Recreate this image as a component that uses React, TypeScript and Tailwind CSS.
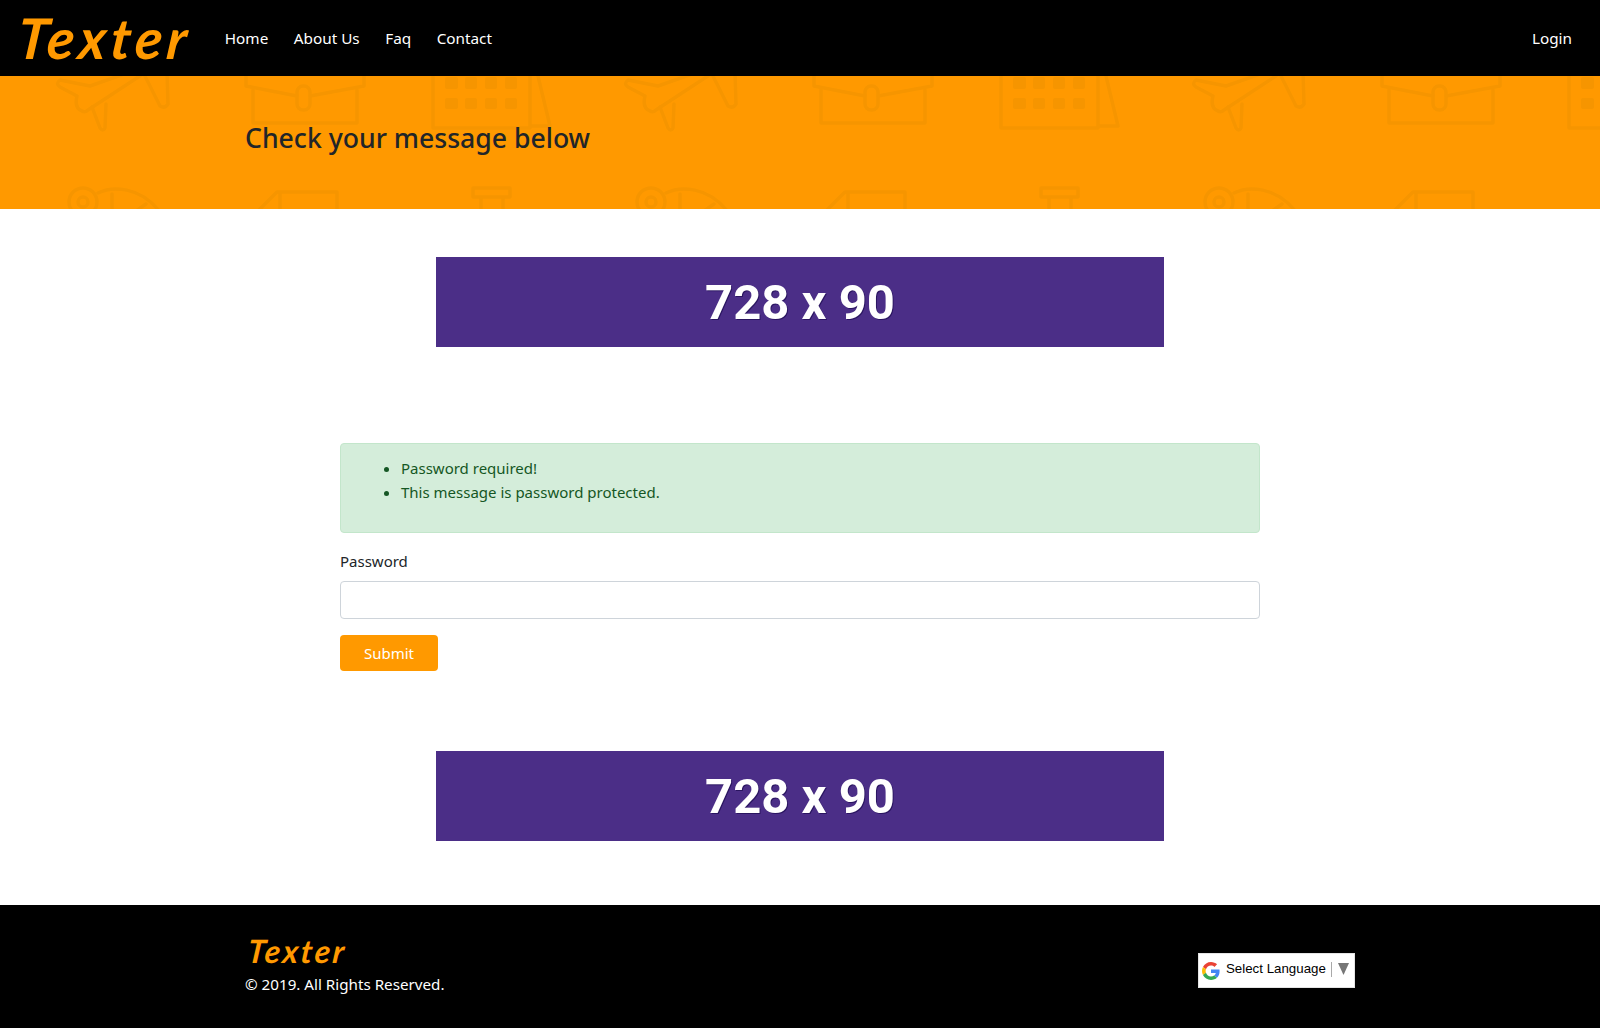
import React from 'react';

const sans = "font-['Segoe_UI','Noto_Sans',sans-serif]";

function HeroPattern() {
  return (
    <svg className="absolute inset-0 h-full w-full" aria-hidden="true">
      <defs>
        <pattern id="tile" x="0" y="0" width="568" height="133" patternUnits="userSpaceOnUse">
          <g fill="none" stroke="#f69500" strokeWidth="3.5" strokeLinejoin="round" strokeLinecap="round">
            {/* plane */}
            <path d="M130 -4 L90 10 L60 4 Q55 8 60 11 L77 20 Q74 32 82 35 Q85 37 88 34 L146 -4" />
            <path d="M92 31 L100 52 Q103 56 105 52 L106 28" />
            <path d="M143 -4 L160 30 Q165 33 168 28 L167 -4" />
            {/* briefcase */}
            <path d="M246 -4 V10 L297 20 M310 20 L364 10 V-4 M253 14 V47 H357 V14" />
            <rect x="297" y="10" width="13" height="24" rx="6" />
            {/* calendar */}
            <path d="M433 -4 V52 H530 V-4 M537 -4 L550 50 H530" />
            <g fill="#f69500" stroke="none">
              <rect x="445" y="1" width="13" height="12" rx="2" />
              <rect x="465" y="1" width="12" height="12" rx="2" />
              <rect x="485" y="1" width="12" height="12" rx="2" />
              <rect x="505" y="1" width="12" height="12" rx="2" />
              <rect x="445" y="22" width="13" height="11" rx="2" />
              <rect x="465" y="22" width="12" height="11" rx="2" />
              <rect x="485" y="22" width="12" height="11" rx="2" />
              <rect x="505" y="22" width="12" height="11" rx="2" />
            </g>
            {/* second row */}
            <circle cx="83" cy="126" r="14" />
            <circle cx="83" cy="126" r="5" />
            <path d="M98 117 C112 110 140 110 160 136 M112 118 V137 M133 137 L146 128" />
            <path d="M257 136 L277 116 H337 V137 M280 116 V137" />
            <path d="M473 112 H510 V121 H473 Z M481 121 V137 M503 121 V137" />
          </g>
        </pattern>
      </defs>
      <rect width="100%" height="100%" fill="url(#tile)" />
    </svg>
  );
}

function Ad() {
  return (
    <div className="mx-auto flex h-[90px] w-[728px] items-center justify-center bg-[#4b2e87] pt-[2px]">
      <span className="font-['Roboto',sans-serif] text-[49px] font-bold text-white [text-shadow:1px_1px_0_#2a1560]">
        728 x 90
      </span>
    </div>
  );
}

function Logo({ small }: { small?: boolean }) {
  return (
    <span
      className={
        "inline-block -skew-x-6 font-['Lato',sans-serif] font-bold italic text-[#ff9900] " +
        (small ? 'text-[32px] leading-[32px] tracking-[2.5px]' : 'text-[56px] leading-[58px] tracking-[4.5px]')
      }
    >
      Texter
    </span>
  );
}

export default function App() {
  return (
    <div className={`min-h-[1028px] bg-white text-[15px] text-[#212529] ${sans}`}>
      {/* Header */}
      <nav className="flex h-[76px] items-center bg-black pl-[18px] pr-7 text-[15.3px] text-white">
        <Logo />
        <div className="ml-[33px] flex gap-[25.5px]">
          <a>Home</a>
          <a>About Us</a>
          <a>Faq</a>
          <a>Contact</a>
        </div>
        <a className="ml-auto">Login</a>
      </nav>

      {/* Title */}
      <section className="relative h-[133px] overflow-hidden bg-[#ff9900]">
        <HeroPattern />
        <h3 className="relative pl-[245px] pt-[45px] text-[26.6px] font-medium leading-[34px]">
          Check your message below
        </h3>
      </section>

      <div className="pt-[48px]">
        <Ad />
      </div>

      {/* Form */}
      <div className="mx-auto mt-[96px] w-[920px]">
        <div className="h-[90px] rounded border border-[#c3e6cb] bg-[#d4edda] pl-[40px] pt-[12px] text-[#155724]">
          <ul className="list-disc pl-[20px] leading-6">
            <li>Password required!</li>
            <li>This message is password protected.</li>
          </ul>
        </div>
        <label className="mt-[16px] block leading-6">Password</label>
        <input className="mt-2 block h-[38px] w-full rounded border border-[#ced4da] bg-white px-3" type="password" />
        <button className="mt-4 h-[36px] w-[98px] rounded bg-[#ff9900] text-white">Submit</button>
      </div>

      <div className="pt-[80px]">
        <Ad />
      </div>

      {/* Footer */}
      <footer className="mt-[64px] flex h-[123px] justify-between bg-black px-[245px] text-white">
        <div className="pt-[30px]">
          <div className="pl-[3px]">
            <Logo small />
          </div>
          <p className="mt-[3px] text-[15.2px] leading-6">© 2019. All Rights Reserved.</p>
        </div>
        <div className="mt-[48px] flex h-[35px] w-[157px] items-center self-start border border-[#e4e4e4] bg-white pb-[3px] pl-[3px] font-['Liberation_Sans',sans-serif] text-[13.3px] text-black">
          <svg viewBox="0 0 48 48" className="h-[18px] w-[18px] shrink-0 translate-y-[2px]">
            <path fill="#EA4335" d="M24 9.5c3.5 0 6.7 1.2 9.2 3.6l6.9-6.9C35.9 2.4 30.5 0 24 0 14.6 0 6.5 5.4 2.6 13.2l8 6.2C12.5 13.7 17.8 9.5 24 9.5z" />
            <path fill="#4285F4" d="M46.9 24.5c0-1.6-.1-3.1-.4-4.5H24v9h12.9c-.6 3-2.2 5.5-4.7 7.2l7.7 6c4.5-4.2 7-10.3 7-17.7z" />
            <path fill="#FBBC05" d="M10.5 28.6c-.5-1.4-.8-3-.8-4.6s.3-3.2.8-4.6l-8-6.2C.9 16.5 0 20.1 0 24s.9 7.5 2.6 10.8l7.9-6.2z" />
            <path fill="#34A853" d="M24 48c6.5 0 11.9-2.1 15.9-5.8l-7.7-6c-2.2 1.4-4.9 2.3-8.2 2.3-6.2 0-11.5-4.2-13.4-9.9l-8 6.2C6.5 42.6 14.6 48 24 48z" />
          </svg>
          <span className="ml-[6px]">Select Language</span>
          <span className="ml-[5px] h-[15px] w-px bg-[#a9a9a9]" />
          <svg viewBox="0 0 11 12" className="ml-[6px] h-[12px] w-[11px]">
            <path d="M0 0 H11 L5.5 12 Z" fill="#767676" />
          </svg>
        </div>
      </footer>
    </div>
  );
}
